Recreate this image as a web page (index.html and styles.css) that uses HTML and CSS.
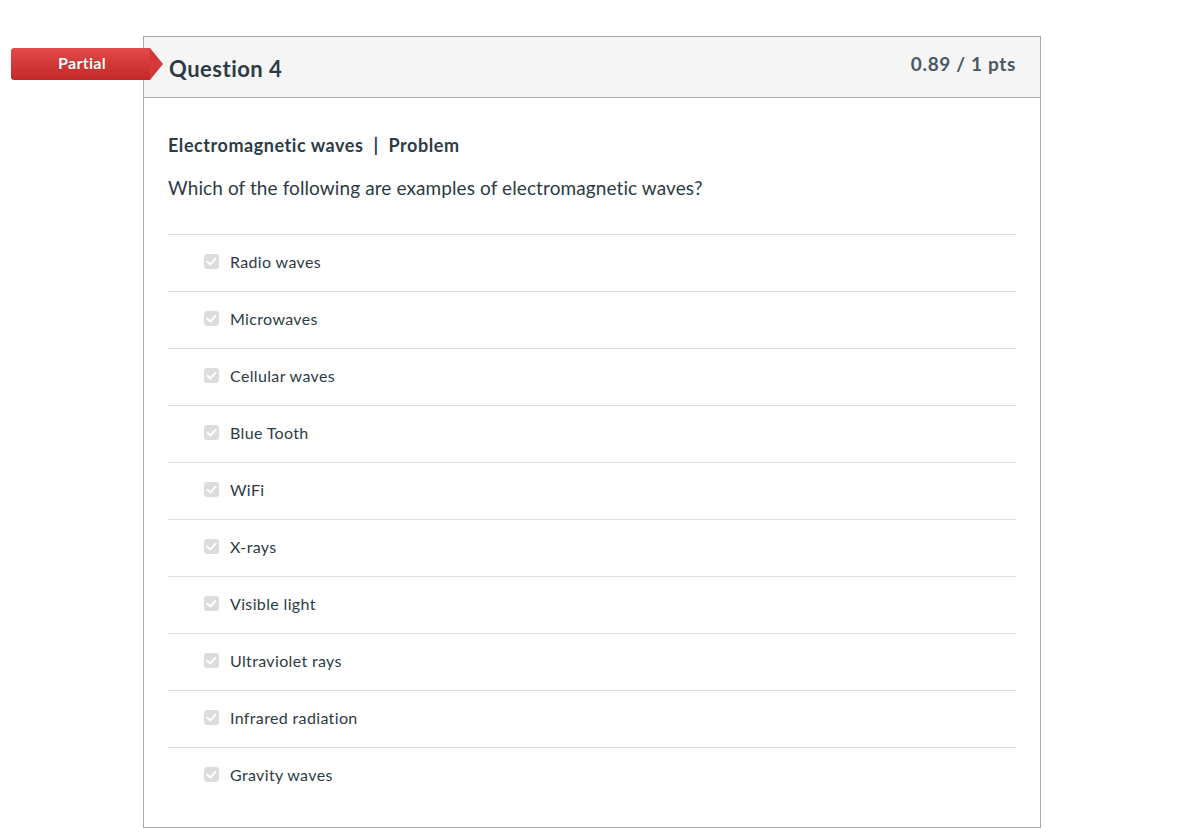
FILE: index.html
```html
<!DOCTYPE html>
<html>
<head>
<meta charset="utf-8">
<link rel="stylesheet" href="styles.css">
</head>
<body>
<div class="page">
  <div class="question">
    <div class="badge">Partial</div>
    <div class="q-header">
      <h2 class="q-title">Question 4</h2>
      <div class="q-points">0.89 / 1 pts</div>
    </div>
    <div class="q-body">
      <p class="q-topic">Electromagnetic waves <span class="sep">|</span> Problem</p>
      <p class="q-text">Which of the following are examples of electromagnetic waves?</p>
      <ul class="answers">
        <li class="answer"><span class="cb"><svg viewBox="0 0 14 14"><path d="M3.3 7.2 L5.9 9.8 L10.8 4.4" /></svg></span>Radio waves</li>
        <li class="answer"><span class="cb"><svg viewBox="0 0 14 14"><path d="M3.3 7.2 L5.9 9.8 L10.8 4.4" /></svg></span>Microwaves</li>
        <li class="answer"><span class="cb"><svg viewBox="0 0 14 14"><path d="M3.3 7.2 L5.9 9.8 L10.8 4.4" /></svg></span>Cellular waves</li>
        <li class="answer"><span class="cb"><svg viewBox="0 0 14 14"><path d="M3.3 7.2 L5.9 9.8 L10.8 4.4" /></svg></span>Blue Tooth</li>
        <li class="answer"><span class="cb"><svg viewBox="0 0 14 14"><path d="M3.3 7.2 L5.9 9.8 L10.8 4.4" /></svg></span>WiFi</li>
        <li class="answer"><span class="cb"><svg viewBox="0 0 14 14"><path d="M3.3 7.2 L5.9 9.8 L10.8 4.4" /></svg></span>X-rays</li>
        <li class="answer"><span class="cb"><svg viewBox="0 0 14 14"><path d="M3.3 7.2 L5.9 9.8 L10.8 4.4" /></svg></span>Visible light</li>
        <li class="answer"><span class="cb"><svg viewBox="0 0 14 14"><path d="M3.3 7.2 L5.9 9.8 L10.8 4.4" /></svg></span>Ultraviolet rays</li>
        <li class="answer"><span class="cb"><svg viewBox="0 0 14 14"><path d="M3.3 7.2 L5.9 9.8 L10.8 4.4" /></svg></span>Infrared radiation</li>
        <li class="answer"><span class="cb"><svg viewBox="0 0 14 14"><path d="M3.3 7.2 L5.9 9.8 L10.8 4.4" /></svg></span>Gravity waves</li>
      </ul>
    </div>
  </div>
</div>
</body>
</html>
```

FILE: styles.css
```css
html, body {
  margin: 0;
  padding: 0;
  background: #ffffff;
}
body {
  font-family: Lato, "Open Sans", "Liberation Sans", sans-serif;
  color: #2d3b45;
}
.page {
  padding: 36px 0 0 143px;
  width: 898px;
}
.question {
  position: relative;
  border: 1px solid #aaaaaa;
  background: #fff;
}
.badge {
  position: absolute;
  left: -133px;
  top: 11px;
  width: 139px;
  height: 32px;
  box-sizing: border-box;
  padding-left: 3px;
  background: linear-gradient(#e24a4a, #c42828);
  border-radius: 3px 0 0 3px;
  color: #fff;
  font-weight: 700;
  font-size: 16px;
  line-height: 30px;
  text-align: center;
  letter-spacing: 0.3px;
  text-shadow: 0 0 1px rgba(0,0,0,0.25);
}
.badge::after {
  content: "";
  position: absolute;
  right: -13px;
  top: 0;
  width: 0;
  height: 0;
  border-top: 16px solid transparent;
  border-bottom: 16px solid transparent;
  border-left: 13px solid #d33737;
}
.q-header {
  display: flex;
  justify-content: space-between;
  align-items: flex-start;
  background: #f5f5f5;
  border-bottom: 1px solid #aaaaaa;
  height: 60px;
  padding: 0 24px 0 25px;
}
.q-title {
  margin: 0;
  padding-top: 17px;
  font-size: 22px;
  font-weight: 700;
  line-height: 30px;
  letter-spacing: 0.5px;
  color: #2d3b45;
}
.q-points {
  padding-top: 14px;
  font-size: 19px;
  font-weight: 700;
  line-height: 26px;
  letter-spacing: 0.65px;
  color: #4b5964;
}
.q-body {
  padding: 35px 24px 23px 24px;
}
.q-topic {
  margin: 0;
  font-size: 18px;
  font-weight: 700;
  line-height: 24px;
  letter-spacing: 0.55px;
}
.sep {
  padding: 0 5px;
}
.q-text {
  margin: 18px 0 0 0;
  font-size: 19px;
  line-height: 26px;
  letter-spacing: 0.1px;
}
.answers {
  list-style: none;
  margin: 33px 0 0 0;
  padding: 0;
}
.answer {
  display: flex;
  align-items: center;
  height: 56px;
  box-sizing: border-box;
  height: 57px;
  padding-bottom: 3px;
  border-top: 1px solid #dddddd;
  padding-left: 36px;
  font-size: 16px;
  letter-spacing: 0.35px;
  color: #2d3b45;
}
.cb {
  display: inline-flex;
  width: 15px;
  height: 15px;
  margin-right: 11px;
  background: #dcdcdc;
  border-radius: 3px;
}
.cb svg {
  width: 15px;
  height: 15px;
}
.cb path {
  fill: none;
  stroke: #ffffff;
  stroke-width: 1.8;
  stroke-linecap: round;
  stroke-linejoin: round;
}
```
